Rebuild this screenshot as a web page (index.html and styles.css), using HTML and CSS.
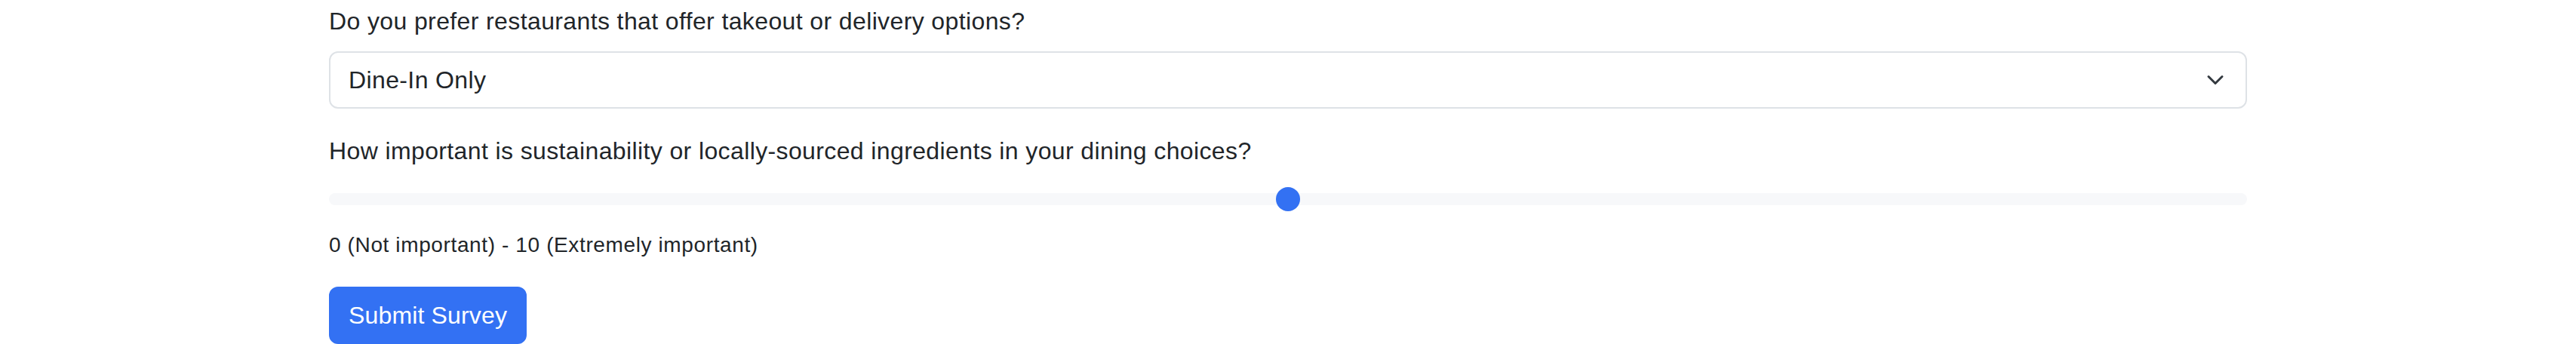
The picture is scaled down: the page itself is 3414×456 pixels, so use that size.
FILE: index.html
```html
<!DOCTYPE html>
<html lang="en">
<head>
<meta charset="utf-8">
<title>Survey</title>
<link rel="stylesheet" href="styles.css">
</head>
<body>
<main class="survey">
  <div class="field">
    <label class="field-label" for="delivery">Do you prefer restaurants that offer takeout or delivery options?</label>
    <div class="select" id="delivery">
      <span class="select-value">Dine-In Only</span>
      <svg class="select-chevron" viewBox="0 0 16 16" width="32" height="24" aria-hidden="true">
        <path d="m2 5 6 6 6-6" fill="none" stroke="#343a40" stroke-width="2" stroke-linecap="round" stroke-linejoin="round"/>
      </svg>
    </div>
  </div>
  <div class="field">
    <label class="field-label" for="sustain">How important is sustainability or locally-sourced ingredients in your dining choices?</label>
    <input class="range" id="sustain" type="range" min="0" max="10" value="5">
    <div class="range-help">0 (Not important) - 10 (Extremely important)</div>
  </div>
  <button class="btn-submit" type="submit">Submit Survey</button>
</main>
</body>
</html>
```

FILE: styles.css
```css
html, body {
  margin: 0;
  padding: 0;
  background: #ffffff;
}

body {
  font-family: "Liberation Sans", Arial, sans-serif;
  font-size: 32px;
  line-height: 48px;
  letter-spacing: 0.38px;
  color: #212529;
}

.survey {
  width: 2542px;
  margin: 0 auto;
  padding-top: 4px;
  display: flex;
  flex-direction: column;
  align-items: flex-start;
}

.field {
  align-self: stretch;
  display: flex;
  flex-direction: column;
  margin-bottom: 32px;
}

.field-label {
  display: block;
  margin-bottom: 16px;
}

.select {
  box-sizing: border-box;
  height: 76px;
  display: flex;
  align-items: center;
  justify-content: space-between;
  padding: 12px 24px;
  border: 2px solid #dee2e6;
  border-radius: 12px;
  background: #ffffff;
}

.select-chevron {
  display: block;
  width: 32px;
  height: 24px;
}

.range {
  -webkit-appearance: none;
  appearance: none;
  display: block;
  width: 100%;
  height: 48px;
  margin: 0;
  padding: 0;
  background: transparent;
}

.range::-webkit-slider-runnable-track {
  height: 16px;
  border-radius: 16px;
  background: #f7f8fa;
  border: 0;
}

.range::-webkit-slider-thumb {
  -webkit-appearance: none;
  appearance: none;
  width: 32px;
  height: 32px;
  margin-top: -8px;
  border: 0;
  border-radius: 50%;
  background: #3371f3;
}

.range-help {
  margin-top: 16px;
  margin-bottom: 2px;
  font-size: 28px;
  line-height: 42px;
  letter-spacing: 0.62px;
}

.btn-submit {
  box-sizing: border-box;
  height: 76px;
  padding: 12px 24px;
  border: 2px solid #3371f3;
  border-radius: 12px;
  background: #3371f3;
  color: #ffffff;
  font-family: "Liberation Sans", Arial, sans-serif;
  font-size: 32px;
  line-height: 48px;
  letter-spacing: 0.15px;
  cursor: pointer;
}
```
